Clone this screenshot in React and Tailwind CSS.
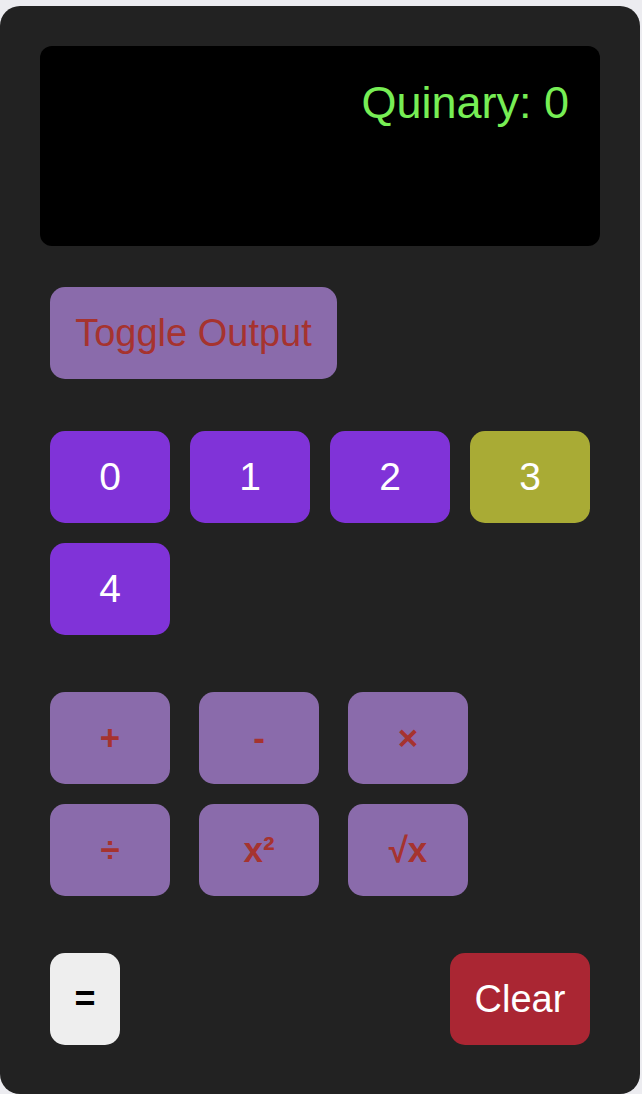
const digits = ['0', '1', '2', '3', '4'];
const ops = ['+', '-', '×', '÷', 'x²', '√x'];

export default function App() {
  return (
    <div className="min-h-screen bg-[#ececf0] pt-[6px] pr-[2px] font-['Liberation_Sans',Arial,sans-serif]">
      <div className="h-[1088px] w-[640px] rounded-[20px] bg-[#222222] px-[40px] pt-[40px]">
        <div className="flex h-[200px] w-[560px] justify-end rounded-[12px] bg-black pr-[31px] pt-[31px]">
          <span className="text-[45px] leading-[52px] text-[#77ee55]">Quinary: 0</span>
        </div>

        <div className="mt-[41px] pl-[10px]">
          <button className="h-[92px] w-[287px] rounded-[15px] bg-[#8a6bab] text-[38px] text-[#a6332f]">
            Toggle Output
          </button>
        </div>

        <div className="mt-[52px] grid grid-cols-[repeat(4,120px)] gap-[20px] pl-[10px]">
          {digits.map((d) => (
            <button
              key={d}
              className={`h-[92px] w-[120px] rounded-[15px] text-[39px] text-white ${
                d === '3' ? 'bg-[#a9ab35]' : 'bg-[#8033d8]'
              }`}
            >
              {d}
            </button>
          ))}
        </div>

        <div className="mt-[57px] grid grid-cols-[repeat(3,120px)] gap-x-[29px] gap-y-[20px] pl-[10px]">
          {ops.map((o) => (
            <button
              key={o}
              className="h-[92px] w-[120px] rounded-[15px] bg-[#8a6bab] text-[35px] font-bold text-[#a6332f]"
            >
              {o}
            </button>
          ))}
        </div>

        <div className="mt-[57px] flex justify-between px-[10px]">
          <button className="h-[92px] w-[70px] rounded-[15px] bg-[#eeeeee] text-[36px] font-bold text-black">
            =
          </button>
          <button className="h-[92px] w-[140px] rounded-[15px] bg-[#aa2633] text-[38px] text-white">
            Clear
          </button>
        </div>
      </div>
    </div>
  );
}
